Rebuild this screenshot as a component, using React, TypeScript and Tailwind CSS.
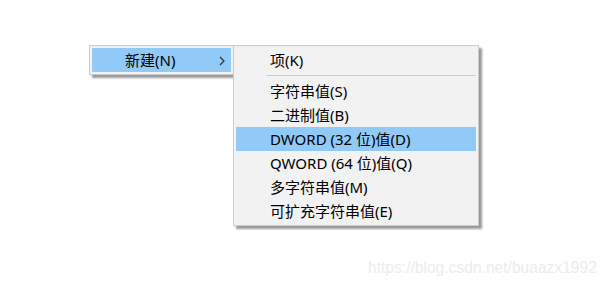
import React from 'react';

const font = {fontFamily: '"Noto Sans", "Noto Sans CJK SC", sans-serif'};

type Item = {label: string; active?: boolean} | 'sep';

const items: Item[] = [
  {label: '项(K)'},
  'sep',
  {label: '字符串值(S)'},
  {label: '二进制值(B)'},
  {label: 'DWORD (32 位)值(D)', active: true},
  {label: 'QWORD (64 位)值(Q)'},
  {label: '多字符串值(M)'},
  {label: '可扩充字符串值(E)'},
];

export default function App() {
  return (
    <div className="relative h-[285px] w-[610px] bg-white text-[15px] text-black" style={font}>
      <div className="flex items-start pl-[89px] pt-[45px]">
        {/* parent menu */}
        <div className="w-[145px] border border-[#cccccc] bg-[#f2f2f2] p-[2px] shadow-[3px_3px_2px_rgba(0,0,0,0.4)]">
          <div className="flex h-[24px] items-center justify-between bg-[#91c9f7] pl-[33px] pr-[6px]">
            <span>新建(N)</span>
            <svg width="6" height="10" viewBox="0 0 6 10" className="mt-px">
              <path d="M1 1l4 4-4 4" fill="none" stroke="#333" strokeWidth="1.2" />
            </svg>
          </div>
        </div>

        {/* submenu */}
        <div className="relative z-10 -ml-px w-[246px] border border-[#cccccc] bg-[#f2f2f2] p-[2px] shadow-[3px_3px_2px_rgba(0,0,0,0.4)]">
          {items.map((item, i) =>
            item === 'sep' ? (
              <div key={i} className="flex h-[7px] items-center pl-[30px]">
                <div className="h-px w-full bg-[#cccccc]" />
              </div>
            ) : (
              <div
                key={i}
                className={`flex h-[24px] items-center pl-[34px] ${item.active ? 'bg-[#91c9f7]' : ''}`}
              >
                {item.label}
              </div>
            ),
          )}
        </div>
      </div>

      <div
        className="absolute left-[368px] top-[256px] text-[15.6px] text-[#ececec]"
        style={{fontFamily: '"Liberation Sans", Arial, sans-serif'}}
      >
        https://blog.csdn.net/buaazx1992
      </div>
    </div>
  );
}
